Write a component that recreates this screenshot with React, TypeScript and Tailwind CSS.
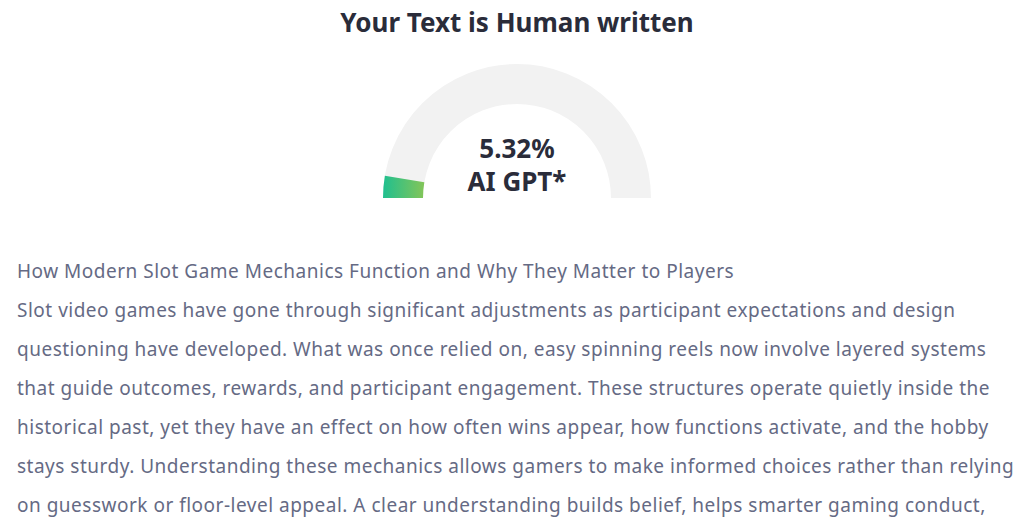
import React from 'react';

const SCORE = 5.32;

const ARTICLE = [
  'Slot video games have gone through significant adjustments as participant expectations and design questioning have developed. What was once relied on, easy spinning reels now involve layered systems that guide outcomes, rewards, and participant engagement. These structures operate quietly inside the historical past, yet they have an effect on how often wins appear, how functions activate, and the hobby stays sturdy. Understanding these mechanics allows gamers to make informed choices rather than relying on guesswork or floor-level appeal. A clear understanding builds belief, helps smarter gaming conduct,',
];

// half ring gauge, fills from the left end
const Gauge: React.FC<{ value: number }> = ({ value }) => {
  const r = 114; // mid radius of the 40px band
  const cx = 134, cy = 134;
  const a = Math.PI - (value / 100) * Math.PI;
  const ex = cx + r * Math.cos(a);
  const ey = cy - r * Math.sin(a);
  return (
    <div className="relative w-[268px] h-[134px] mx-auto">
      <svg width="268" height="134" viewBox="0 0 268 134" className="block">
        <defs>
          <linearGradient id="g" gradientUnits="userSpaceOnUse" x1="0" x2="40" y1="0" y2="0">
            <stop offset="0" stopColor="#1fbf8f" />
            <stop offset="1" stopColor="#80c55a" />
          </linearGradient>
        </defs>
        <path d={`M 20 134 A ${r} ${r} 0 0 1 248 134`} fill="none" stroke="#f2f2f2" strokeWidth="40" />
        <path d={`M 20 134 A ${r} ${r} 0 0 1 ${ex} ${ey}`} fill="none" stroke="url(#g)" strokeWidth="40" />
      </svg>
      <div className="absolute inset-x-0 bottom-0 text-center text-[26px] leading-[33px] font-bold text-[#2a2c3a]">
        <div>{value}%</div>
        <div>AI GPT*</div>
      </div>
    </div>
  );
};

export default function App() {
  return (
    <div className="min-h-screen bg-white font-['Noto_Sans',sans-serif]">
      <div className="pl-[10px]">
        <h2 className="pt-[4px] text-center text-[26px] leading-[36px] font-bold text-[#2a2c3a]">Your Text is Human written</h2>
        <div className="mt-[24px]">
          <Gauge value={SCORE} />
        </div>
      </div>
      <div className="mt-[54px] pl-[17px] pr-[4px] text-[19px] tracking-[0.5px] leading-[39px] text-[#656a84]">
        <div>How Modern Slot Game Mechanics Function and Why They Matter to Players</div>
        {ARTICLE.map((p, i) => <p key={i}>{p}</p>)}
      </div>
    </div>
  );
}
